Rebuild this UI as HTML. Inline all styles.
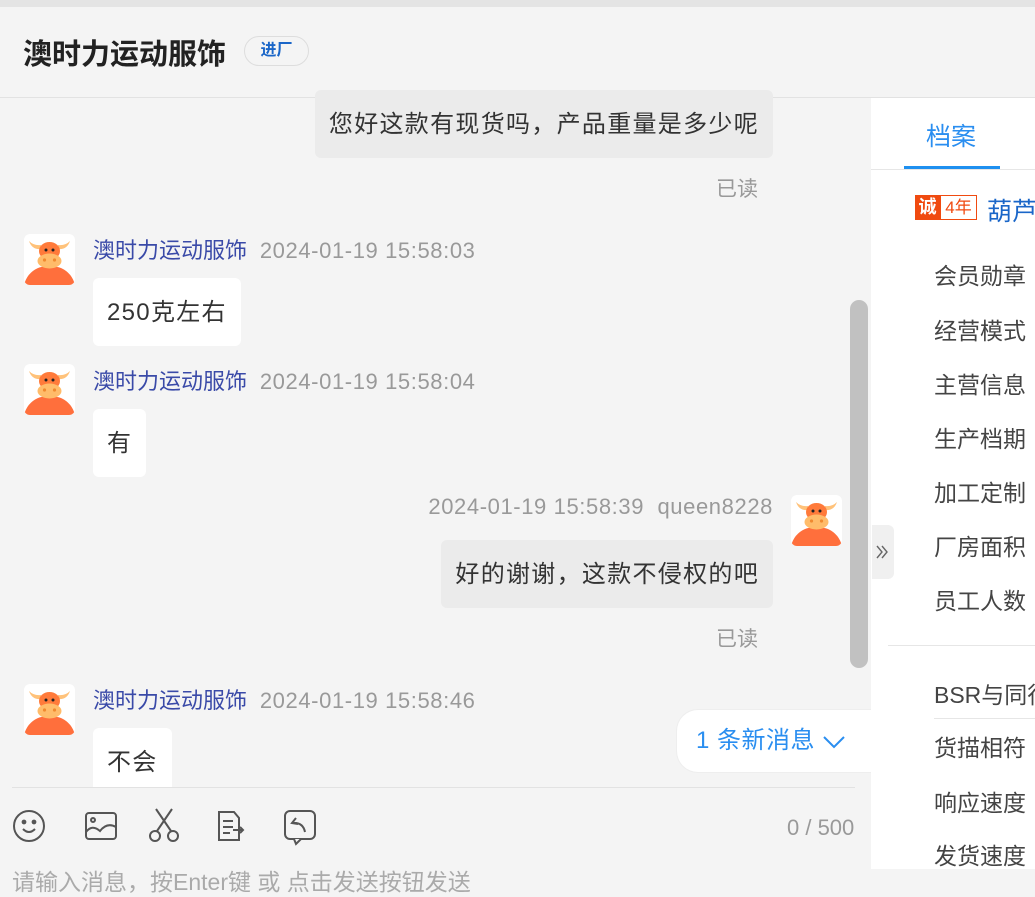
<!DOCTYPE html>
<html><head><meta charset="utf-8"><style>
*{margin:0;padding:0;box-sizing:border-box}
body{width:1035px;height:869px;overflow:hidden;background:#f4f4f4;font-family:"Liberation Sans","Noto Sans CJK SC",sans-serif;position:relative;color:#333}
.a{position:absolute;white-space:nowrap}
.top{left:0;top:0;width:1035px;height:7px;background:#e4e4e4}
.title{left:23px;top:31px;font-size:29px;font-weight:bold;color:#222}
.tag{left:244px;top:36px;width:65px;height:30px;border:1px solid #ddd;border-radius:15px;font-size:16px;color:#1a66c8;font-weight:bold;text-align:center;line-height:28px}
.hline{left:0;top:97px;width:871px;height:1px;background:#e2e2e2}
.right{left:871px;top:97px;width:164px;height:772px;background:#fff;border-top:1px solid #e2e2e2}
.bub{background:#fff;border-radius:6px;font-size:24px;letter-spacing:1.3px;padding:0 14px;height:68px;line-height:70px;color:#333}
.bub.me{background:#ebebeb}
.name{font-size:22px;color:#3a4aa8}
.time{font-size:22px;letter-spacing:0.6px;color:#999}
.read{font-size:21px;color:#999}
.av{width:51px;height:51px;border-radius:6px;background:#fff;overflow:hidden}
.r{font-size:23px;color:#444;left:934px}
</style></head><body>
<div class="a top"></div>
<div class="a title">澳时力运动服饰</div>
<div class="a tag">进厂</div>
<div class="a hline"></div>

<div class="a bub me" style="right:262px;top:90px;height:68px">您好这款有现货吗，产品重量是多少呢</div>
<div class="a read" style="left:716px;top:173px">已读</div>

<svg width="0" height="0" style="position:absolute"><defs><symbol id="cow" viewBox="0 0 51 51"><path d="M0 51 Q3 39 14 34 Q25 30 37 34 Q48 39 51 51Z" fill="#ff6f3c"/><path d="M5 7 Q8 16 17 15 L17 11 Q10 12 5 7Z M46 7 Q43 16 34 15 L34 11 Q41 12 46 7Z" fill="#ffc27a"/><ellipse cx="25.5" cy="17" rx="10.5" ry="9" fill="#ff7a3a"/><circle cx="22" cy="16" r="1.5" fill="#222"/><circle cx="29" cy="16" r="1.5" fill="#222"/><ellipse cx="25.5" cy="27" rx="12" ry="7.5" fill="#ffbc6a"/><circle cx="20.5" cy="26" r="1.6" fill="#f08a30"/><circle cx="30.5" cy="26" r="1.6" fill="#f08a30"/></symbol></defs></svg>

<div class="a av" style="left:24px;top:234px"><svg width="51" height="51"><use href="#cow"/></svg></div>
<div class="a name" style="left:93px;top:233px">澳时力运动服饰 <span class="time">&nbsp;2024-01-19 15:58:03</span></div>
<div class="a bub" style="left:93px;top:278px">250克左右</div>

<div class="a av" style="left:24px;top:364px"><svg width="51" height="51"><use href="#cow"/></svg></div>
<div class="a name" style="left:93px;top:364px">澳时力运动服饰 <span class="time">&nbsp;2024-01-19 15:58:04</span></div>
<div class="a bub" style="left:93px;top:409px">有</div>

<div class="a time" style="right:262px;top:494px">2024-01-19 15:58:39 &nbsp;queen8228</div>
<div class="a av" style="left:791px;top:495px"><svg width="51" height="51"><use href="#cow"/></svg></div>
<div class="a bub me" style="right:262px;top:540px">好的谢谢，这款不侵权的吧</div>
<div class="a read" style="left:716px;top:623px">已读</div>

<div class="a av" style="left:24px;top:684px"><svg width="51" height="51"><use href="#cow"/></svg></div>
<div class="a name" style="left:93px;top:683px">澳时力运动服饰 <span class="time">&nbsp;2024-01-19 15:58:46</span></div>
<div class="a bub" style="left:93px;top:728px;height:60px;border-radius:6px 6px 0 0">不会</div>

<div class="a" style="left:850px;top:300px;width:18px;height:368px;background:#c1c1c1;border-radius:9px"></div>

<div class="a" style="left:676px;top:709px;width:196px;height:64px;background:#fff;border-radius:22px 0 0 22px;border:1px solid #eee;border-right:none;font-size:24px;letter-spacing:0.5px;color:#2a8ef0;line-height:62px;padding-left:19px">1 条新消息 <svg width="24" height="14" style="vertical-align:middle"><path d="M2 2 L12 12 L22 2" stroke="#2a8ef0" stroke-width="2" fill="none"/></svg></div>

<div class="a" style="left:12px;top:787px;width:843px;height:1px;background:#e2e2e2"></div>
<svg class="a" style="left:0;top:806px" width="330" height="40" fill="none" stroke="#555" stroke-width="2">
<circle cx="29" cy="20" r="15"/><circle cx="24" cy="16" r="1.4" fill="#555"/><circle cx="34" cy="16" r="1.4" fill="#555"/><path d="M23 23 Q29 29 35 23"/>
<rect x="86" y="7" width="30" height="26" rx="3"/><circle cx="93" cy="14" r="2"/><path d="M86 26 Q92 18 100 25 Q107 16 116 21"/>
<circle cx="155" cy="30" r="5"/><circle cx="173" cy="30" r="5"/><path d="M157 25 L172 3 M171 25 L156 3"/>
<path d="M219 6 H234 L239 12 V34 H219 Z M223 15 H233 M223 21 H233 M223 27 H230 M233 24 H243 M240 21 L243 24 L240 27"/>
<rect x="285" y="5" width="30" height="28" rx="5"/><path d="M294 33 L296 38 L301 33" fill="#f4f4f4"/><path d="M296 12 L292 17 L298 18 M292 17 Q303 16 305 26"/>
</svg>
<div class="a" style="left:787px;top:815px;font-size:22px;color:#999">0 / 500</div>
<div class="a" style="left:12px;top:863px;font-size:23px;color:#aaa">请输入消息，按Enter键 或 点击发送按钮发送</div>

<div class="a right"></div>
<div class="a" style="left:926px;top:117px;font-size:25px;color:#2a8ef0">档案</div>
<div class="a" style="left:904px;top:166px;width:96px;height:3px;background:#1e90f0"></div>
<div class="a" style="left:871px;top:169px;width:164px;height:1px;background:#e6e6e6"></div>
<div class="a" style="left:915px;top:195px;width:25px;height:25px;background:#f04a10;color:#fff;font-size:18px;line-height:25px;text-align:center;font-weight:bold">诚</div>
<div class="a" style="left:940px;top:195px;width:37px;height:25px;border:1px solid #f04a10;color:#f04a10;font-size:17px;line-height:23px;text-align:center">4年</div>
<div class="a" style="left:987px;top:192px;font-size:25px;color:#1a66c8">葫芦</div>
<div class="a r" style="top:257px">会员勋章</div>
<div class="a r" style="top:312px">经营模式</div>
<div class="a r" style="top:366px">主营信息</div>
<div class="a r" style="top:420px">生产档期</div>
<div class="a r" style="top:474px">加工定制</div>
<div class="a r" style="top:528px">厂房面积</div>
<div class="a r" style="top:582px">员工人数</div>
<div class="a" style="left:888px;top:645px;width:147px;height:1px;background:#e6e6e6"></div>
<div class="a r" style="top:676px">BSR与同行</div>
<div class="a" style="left:934px;top:718px;width:101px;height:1px;background:#e6e6e6"></div>
<div class="a r" style="top:729px">货描相符</div>
<div class="a r" style="top:784px">响应速度</div>
<div class="a r" style="top:837px">发货速度</div>
<div class="a" style="left:872px;top:525px;width:22px;height:54px;background:#f0f0f0;border-radius:0 6px 6px 0"><svg width="22" height="54"><path d="M5 21 L10 27 L5 33 M10 21 L15 27 L10 33" stroke="#666" stroke-width="1.4" fill="none"/></svg></div>
</body></html>
